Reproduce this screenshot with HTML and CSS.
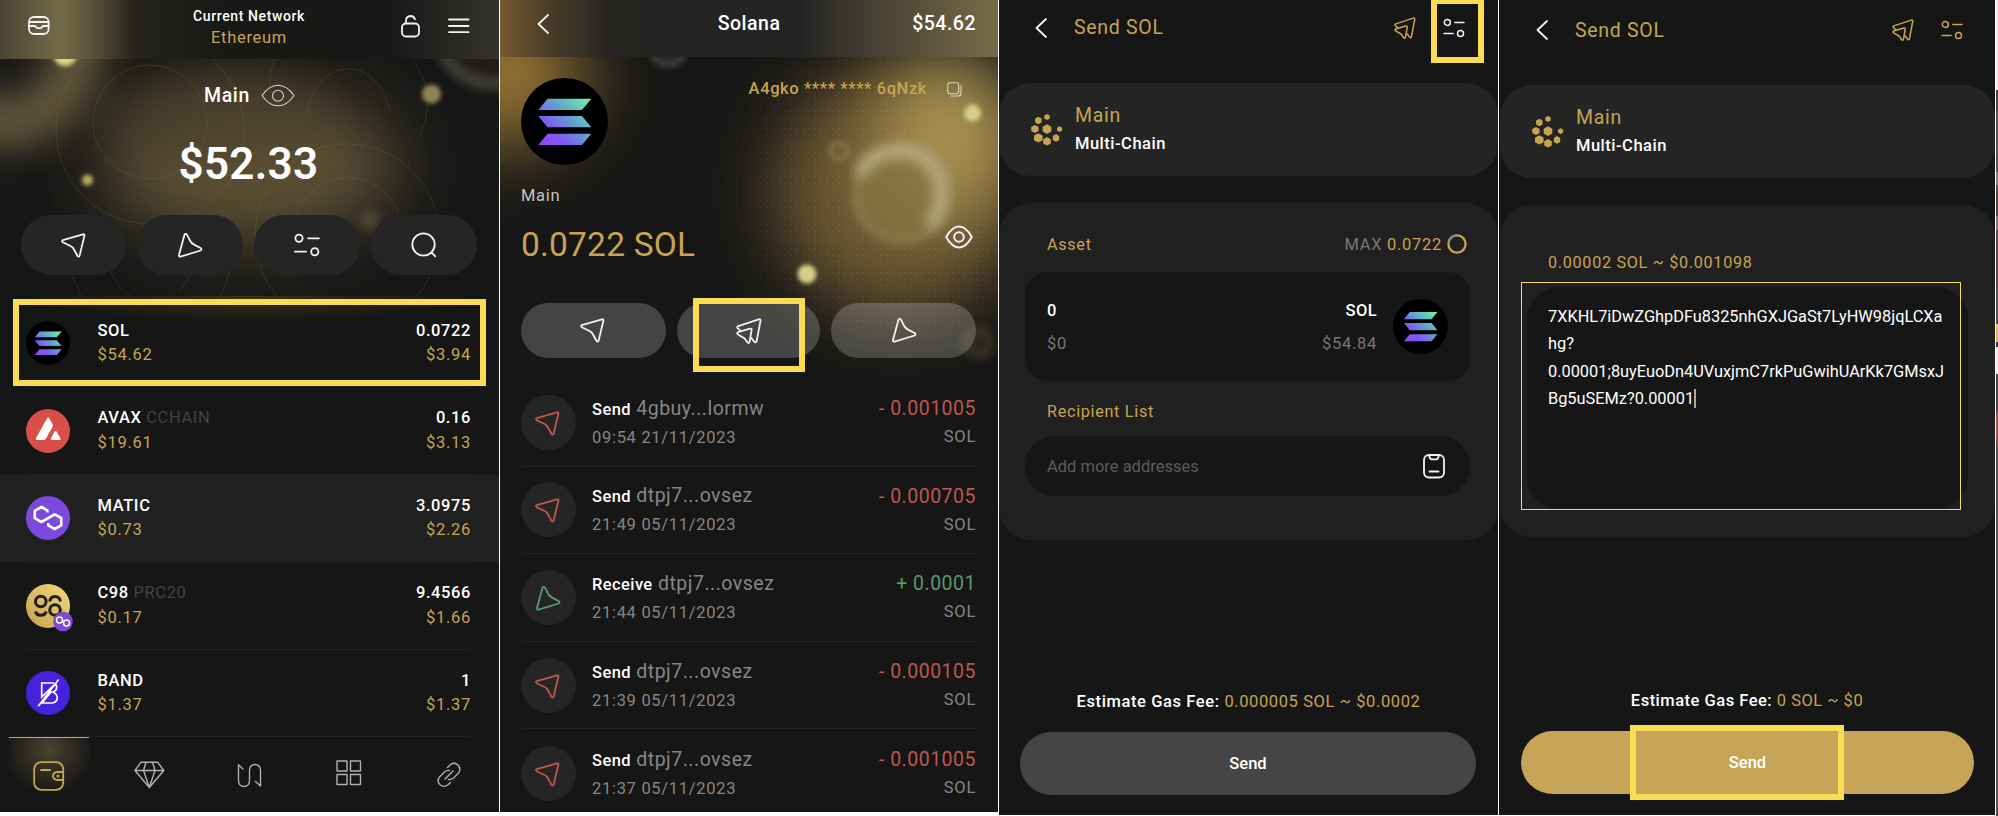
FILE: index.html
```html
<!DOCTYPE html>
<html lang="en">
<head>
<meta charset="utf-8">
<title>Wallet multi-send guide</title>
<link rel="stylesheet" href="styles.css">
</head>
<body>
<svg class="defs" width="0" height="0" aria-hidden="true">
  <defs>
    <linearGradient id="sol" gradientUnits="userSpaceOnUse" x1="20" y1="68" x2="68" y2="20">
      <stop offset="0" stop-color="#9a44fb"/><stop offset=".3" stop-color="#7d5cf0"/><stop offset=".62" stop-color="#62a8cc"/><stop offset="1" stop-color="#70f79f"/>
    </linearGradient>
    <linearGradient id="gold" x1="0" y1="1" x2="1" y2="0"><stop offset="0" stop-color="#c8a052"/><stop offset="1" stop-color="#efdb7a"/></linearGradient>
    <symbol id="i-solana" viewBox="0 0 87 87"><circle cx="43.5" cy="43.5" r="43.5" fill="#000"/><path fill="url(#sol)" d="M26.5 20.7H70.3L61 32H17.3ZM17.3 38H61L70.3 49.3H26.5ZM26.5 55.7H70.3L61 67H17.3Z"/></symbol>
    <symbol id="i-send" viewBox="0 0 25 25"><path d="M1.8 7.2 22 1.3Q23.8 1 23.4 2.8L18.6 22.6Q17.7 24.6 16.4 22.8L12.9 16.3Q12 14.4 10 13.2L1.8 9.2Q.2 8 1.8 7.2Z"/></symbol>
    <symbol id="i-receive" viewBox="0 0 25 25"><path d="M6.4 1.9Q7.5-.2 9 1.7L12 7.7Q13.3 10.1 16.5 11.9L22.6 15Q24.4 16.4 22.6 17.5L2.6 23.6Q.6 24 1 22Z"/></symbol>
    <symbol id="i-multi" viewBox="0 0 26 26"><path d="M4.5 12.6 1.8 10.4Q.4 8.9 2.2 8.1L22.7 1.3Q24.9.8 24.5 2.9L20.6 23.4Q19.7 25.3 18.3 23.7L15.5 20.2M2 14.2 14 10.7Q16 10.4 15.6 12.3L13.5 24Q12.5 26 11.3 24.3L8.7 20.4 2 16.4Q.3 15 2 14.2Z"/></symbol>
    <symbol id="i-filter" viewBox="0 0 26 24"><circle cx="5" cy="5.3" r="3.6"/><path d="M14 5.3H25M1 18.7H12"/><circle cx="20.8" cy="18.7" r="3.6"/></symbol>
    <symbol id="i-back" viewBox="0 0 12 20"><path d="M11 1 1.5 10 11 19"/></symbol>
    <symbol id="i-poly" viewBox="0 0 44 44"><path d="M21.4 16.6V14.4L15.4 11 8.8 14.8V22.2L15.4 26 28.7 18.4 35.2 22V29.4L28.7 33 22.3 29.4V27"/></symbol>
    <symbol id="i-nodes" viewBox="0 0 32 32"><path d="M16 0 18.7 1.5V4.5L16 6 13.3 4.5V1.5ZM7.3 2.8 10.5 4.6V8.4L7.3 10.2 4.1 8.4V4.6ZM4 11 7.6 13V17L4 19 .2 17V13ZM16 10.3 20.3 12.8V17.6L16 20 11.7 17.6V12.8ZM28.6 12.2 31.2 13.7V16.6L28.6 18 26 16.6V13.7ZM7.3 19.2 11.6 21.6V26.3L7.3 28.6 3 26.3V21.6ZM25 20 28.2 22V26L25 27.8 21.8 26V22ZM16 23 19.8 25.2V29.4L16 31.6 12.2 29.4V25.2Z"/></symbol>
    <filter id="b1" x="-50%" y="-50%" width="200%" height="200%"><feGaussianBlur stdDeviation="2"/></filter>
    <filter id="b4" x="-50%" y="-50%" width="200%" height="200%"><feGaussianBlur stdDeviation="4"/></filter>
    <filter id="b6" x="-50%" y="-50%" width="200%" height="200%"><feGaussianBlur stdDeviation="6"/></filter>
    <filter id="b20" x="-80%" y="-80%" width="260%" height="260%"><feGaussianBlur stdDeviation="20"/></filter>
    <filter id="b35" x="-80%" y="-80%" width="260%" height="260%"><feGaussianBlur stdDeviation="35"/></filter>
    <pattern id="dots" width="6" height="6" patternUnits="userSpaceOnUse"><circle cx="3" cy="3" r="1" fill="#c8b060" fill-opacity=".1"/></pattern>
    <radialGradient id="dotfade"><stop offset=".5" stop-color="#fff"/><stop offset="1" stop-color="#fff" stop-opacity="0"/></radialGradient>
    <mask id="dotmask"><ellipse cx="400" cy="190" rx="210" ry="190" fill="url(#dotfade)"/></mask>
  </defs>
</svg>

<main class="board">

  <section class="phone wallet">
    <svg class="art" width="499" height="299" viewBox="0 0 499 299">
      <ellipse cx="250" cy="165" rx="150" ry="78" fill="#5d5135" filter="url(#b35)"/>
      <ellipse cx="215" cy="120" rx="110" ry="45" fill="#4a3f2c" opacity=".6" filter="url(#b20)"/>
      <circle cx="2" cy="48" r="76" fill="none" stroke="#6f6440" stroke-width="44" filter="url(#b20)"/>
      <circle cx="492" cy="30" r="54" fill="#201f1d" stroke="#403c35" stroke-width="12" filter="url(#b4)"/>
      <g fill="none" stroke="#8a7b58" stroke-opacity=".2">
        <circle cx="150" cy="122" r="57"/><circle cx="150" cy="130" r="94"/><path d="M306 115A43 57 0 0 1 390 112M275 60Q268 75 270 90M412 60Q440 95 418 140"/><path d="M297 214A54 54 0 0 1 399 214"/><circle cx="347" cy="236" r="92"/><path d="M72 275 82 299M111 272Q118 288 130 296M190 275 180 292M229 272Q227 284 221 295"/>
      </g>
      <circle cx="370" cy="220" r="10" fill="#67603f" opacity=".5" filter="url(#b4)"/>
      <g filter="url(#b1)"><circle cx="65" cy="54" r="12" fill="#ddd582"/><circle cx="431.500" cy="94" r="9.500" fill="#8f8657"/><circle cx="87.500" cy="180" r="5.500" fill="#bbb062"/></g>
    </svg>
    <header class="top">
      <svg class="line i-inbox" width="22" height="20" viewBox="0 0 22 20"><rect x="1" y="1" width="19.600" height="17" rx="5"/><path d="M1 6H20.600M1 10H6.500Q7.500 10 8 11 9 12.500 11 12 13 12.500 14 11 14.500 10 15.500 10H20.600"/></svg>
      <div class="net"><span class="net-label">Current Network</span><span class="net-name">Ethereum</span></div>
      <svg class="line i-lock" width="20" height="23" viewBox="0 0 20 23"><rect x="1" y="8.500" width="17" height="13" rx="4"/><path d="M5 8V5.500Q5.300 1.200 9.500 1 13 1 14 4.200"/></svg>
      <svg class="line i-menu" width="22" height="16" viewBox="0 0 22 16"><path d="M1 1.500H20.500M1 8H20.500M1 14.200H20.500"/></svg>
    </header>
    <div class="account"><span>Main</span><svg class="line thin" width="34" height="23" viewBox="0 0 34 23"><path d="M1 11.500Q8 1.200 17 1.200T33 11.500Q26 21.800 17 21.800T1 11.500Z"/><circle cx="17" cy="11.800" r="5.500"/></svg></div>
    <div class="balance">$52.33</div>
    <div class="actions">
      <div class="pill"><svg class="line" width="25" height="25"><use href="#i-send"/></svg></div>
      <div class="pill"><svg class="line" width="25" height="25"><use href="#i-receive"/></svg></div>
      <div class="pill"><svg class="line" width="26" height="24"><use href="#i-filter"/></svg></div>
      <div class="pill"><svg class="line" width="26" height="26" viewBox="0 0 26 26"><circle cx="12.500" cy="12.500" r="11.200"/><path d="M20.500 20.500 24.300 24.300"/></svg></div>
    </div>
    <div class="tokens">
      <div class="glow"></div>
      <div class="token"><svg class="coin" width="44" height="44"><use href="#i-solana"/></svg><div class="info"><b>SOL</b><i>$54.62</i></div><div class="info end"><b>0.0722</b><i>$3.94</i></div></div>
      <div class="token"><svg class="coin" width="44" height="44" viewBox="0 0 44 44"><circle cx="22" cy="22" r="22" fill="#d84f4a"/><path fill="#fff" d="M21 9.500Q22.300 7.500 23.500 9.500L26.600 15.200Q27.200 16.500 26.500 18L20 29.500Q19 31 17.500 31H10.500Q9 30.700 10 29ZM28.500 22.500Q29.500 21.300 30.500 22.500L34.500 29.500Q35.200 31 33.800 31H25.600Q24.400 30.800 25 29.300Z"/></svg><div class="info"><b>AVAX <em>CCHAIN</em></b><i>$19.61</i></div><div class="info end"><b>0.16</b><i>$3.13</i></div></div>
      <div class="token hover"><svg class="coin" width="44" height="44" viewBox="0 0 44 44"><circle cx="22" cy="22" r="22" fill="#7b49dc"/><use class="polyline" href="#i-poly" width="44" height="44"/></svg><div class="info"><b>MATIC</b><i>$0.73</i></div><div class="info end"><b>3.0975</b><i>$2.26</i></div></div>
      <div class="token"><svg class="coin" width="48" height="44" viewBox="0 0 48 44"><circle cx="22" cy="22" r="22" fill="url(#gold)"/><g fill="none" stroke="#221f1a" stroke-width="3"><circle cx="14.800" cy="17.500" r="5.300"/><path d="M9.500 27.500Q10.500 31.300 14.800 31.300T20.200 27.500"/><circle cx="29" cy="26" r="5.300"/><path d="M23.700 17.500Q24.500 12.500 29 12.500T34.400 17.500"/></g><circle cx="37" cy="37.500" r="9.800" fill="#7b49dc"/><g fill="none" stroke="#fff" stroke-width="1.500"><circle cx="33.500" cy="36" r="3"/><circle cx="40.500" cy="39" r="3"/></g></svg><div class="info"><b>C98 <em>PRC20</em></b><i>$0.17</i></div><div class="info end"><b>9.4566</b><i>$1.66</i></div></div>
      <div class="token"><svg class="coin" width="44" height="44" viewBox="0 0 44 44"><circle cx="22" cy="22" r="22" fill="#4523de"/><path fill="none" stroke="#fff" stroke-width="1.700" d="M12.300 35.300 32.600 8.600M28 12H15.700V26L29.500 12.500Q31.500 15 30.500 18 29.500 20 27.500 21H25L16 32H26.500Q31.300 31 31.300 26.500 31 23 27 21.300"/></svg><div class="info"><b>BAND</b><i>$1.37</i></div><div class="info end"><b>1</b><i>$1.37</i></div></div>
    </div>
    <nav class="tabs">
      <div class="tab on"><svg class="line" width="32" height="30" viewBox="0 0 32 30"><rect x="1.200" y="1.200" width="29" height="27.600" rx="7"/><path d="M8 9H17M30 11H24.500Q20 11.500 20 15T24.500 19H30"/><circle cx="25" cy="15" r=".6"/></svg></div>
      <div class="tab"><svg class="line" width="31" height="28" viewBox="0 0 31 28"><path d="M7 1.200H23.500L29.800 9.500 15.300 26.500 1 9.500ZM1 9.500H29.800M12 1.200 9.500 9.500 15.300 26.500 21 9.500 18.500 1.200"/></svg></div>
      <div class="tab"><svg class="line" width="25" height="25" viewBox="0 0 25 25"><path d="M6 6 1.500 1.800V18Q2 23.500 7 23.500T12.500 18V7Q13 1.500 18 1.500T23.500 7V23L18.500 18.500"/></svg></div>
      <div class="tab up"><svg class="line" width="26" height="26" viewBox="0 0 26 26"><path d="M1 1H11V11H1ZM14.500 1H24.500V11H14.500ZM1 14.500H11V24.500H1ZM14.500 14.500H24.500V24.500H14.500Z"/></svg></div>
      <div class="tab"><svg class="line" width="26" height="26" viewBox="0 0 26 26"><path d="M11.500 5.500 14 3Q18-.5 22 3 25.500 7 22.500 11L17.500 16Q15 18 12.500 17.500M14.500 20.500 12 22.800Q8 26 4 22.800 .5 19 3.500 15L8.500 10Q11 8 13.500 8.500M9 17 17 9"/></svg></div>
    </nav>
    <div class="mark mark-sol"></div>
  </section>

  <section class="phone history">
    <svg class="art" width="498" height="380" viewBox="0 0 498 380">
      <ellipse cx="5" cy="80" rx="90" ry="75" fill="#7a622f" filter="url(#b35)"/>
      <circle cx="5" cy="68" r="38" fill="#a07938" opacity=".6" filter="url(#b20)"/>
      <ellipse cx="400" cy="190" rx="125" ry="125" fill="#6d5932" filter="url(#b35)"/>
      <ellipse cx="450" cy="135" rx="70" ry="80" fill="#b39b54" opacity=".85" filter="url(#b35)"/>
      <rect x="200" y="57" width="298" height="310" fill="url(#dots)" mask="url(#dotmask)"/>
      <circle cx="402" cy="194" r="47" fill="#86763f" stroke="#94855a" stroke-width="6" opacity=".75" filter="url(#b4)"/>
      <path d="M362 170Q374 151 402 151 432 153 441 184 443 205 433 221" fill="none" stroke="#c9bb93" stroke-width="16" stroke-linecap="round" opacity=".65" filter="url(#b6)"/>
      <circle cx="339" cy="151" r="9" fill="#7b6b40" stroke="#95855a" stroke-width="4" opacity=".5" filter="url(#b1)"/>
      <circle cx="168" cy="48" r="16" fill="#222" stroke="#373635" stroke-width="9" filter="url(#b1)"/>
      <circle cx="478" cy="343" r="13" fill="#3b301a" stroke="#5c5240" stroke-width="7" opacity=".45" filter="url(#b4)"/>
      <g filter="url(#b1)" fill="#d8cf87"><circle cx="472.500" cy="113" r="8.500"/><circle cx="307" cy="274" r="9.500"/></g>
    </svg>
    <header class="top"><svg class="line chev" width="12" height="20"><use href="#i-back"/></svg><h1>Solana</h1><span class="price">$54.62</span></header>
    <div class="hero">
      <div class="hero-row"><svg width="87" height="87"><use href="#i-solana"/></svg><div class="addr"><span>A4gko **** **** 6qNzk</span><svg class="line thin" width="15" height="15" viewBox="0 0 15 15"><rect x=".7" y=".7" width="11" height="11" rx="2.500"/><path d="M14 3.500V11Q14 14 11 14H4"/></svg></div></div>
      <p class="who">Main</p>
      <div class="amount"><span>0.0722 SOL</span><svg class="line eye" width="28" height="24" viewBox="0 0 28 24"><path d="M1.200 12Q7 1.500 14 1.500T26.800 12Q21 22.500 14 22.500T1.200 12Z"/><circle cx="14" cy="12" r="4.800"/></svg></div>
    </div>
    <div class="actions">
      <div class="pill"><svg class="line" width="25" height="25"><use href="#i-send"/></svg></div>
      <div class="pill"><svg class="line" width="26" height="26"><use href="#i-multi"/></svg></div>
      <div class="pill"><svg class="line" width="25" height="25"><use href="#i-receive"/></svg></div>
    </div>
    <div class="txs">
      <div class="tx"><div class="dir"><svg class="line" width="25" height="25"><use href="#i-send"/></svg></div><div class="what"><p><b>Send</b> <span>4gbuy...lormw</span></p><small>09:54 21/11/2023</small></div><div class="sum"><p>- 0.001005</p><small>SOL</small></div></div>
      <div class="tx"><div class="dir"><svg class="line" width="25" height="25"><use href="#i-send"/></svg></div><div class="what"><p><b>Send</b> <span>dtpj7...ovsez</span></p><small>21:49 05/11/2023</small></div><div class="sum"><p>- 0.000705</p><small>SOL</small></div></div>
      <div class="tx in"><div class="dir"><svg class="line" width="25" height="25"><use href="#i-receive"/></svg></div><div class="what"><p><b>Receive</b> <span>dtpj7...ovsez</span></p><small>21:44 05/11/2023</small></div><div class="sum"><p>+ 0.0001</p><small>SOL</small></div></div>
      <div class="tx"><div class="dir"><svg class="line" width="25" height="25"><use href="#i-send"/></svg></div><div class="what"><p><b>Send</b> <span>dtpj7...ovsez</span></p><small>21:39 05/11/2023</small></div><div class="sum"><p>- 0.000105</p><small>SOL</small></div></div>
      <div class="tx"><div class="dir"><svg class="line" width="25" height="25"><use href="#i-send"/></svg></div><div class="what"><p><b>Send</b> <span>dtpj7...ovsez</span></p><small>21:37 05/11/2023</small></div><div class="sum"><p>- 0.001005</p><small>SOL</small></div></div>
    </div>
    <div class="mark mark-multi"></div>
  </section>

  <section class="phone send">
    <header class="bar"><svg class="line chev" width="12" height="20"><use href="#i-back"/></svg><h2>Send SOL</h2><svg class="line gold" width="22" height="22"><use href="#i-multi"/></svg><svg class="line" width="22" height="20"><use href="#i-filter"/></svg></header>
    <div class="card source"><svg class="nodes" width="32" height="32"><use href="#i-nodes"/></svg><div><h3>Main</h3><p>Multi-Chain</p></div></div>
    <div class="card form">
      <div class="label"><span>Asset</span><span class="max"><em>MAX</em> 0.0722</span><svg width="20" height="20" viewBox="0 0 20 20"><circle cx="10" cy="10" r="8.600" fill="none" stroke="#c7a452" stroke-width="2.300"/><path d="M1.700 7.500A8.600 8.600 0 0 1 10 1.400" fill="none" stroke="#858585" stroke-width="2.300"/></svg></div>
      <div class="asset"><div class="col"><b>0</b><i>$0</i></div><div class="col end"><b>SOL</b><i>$54.84</i></div><svg width="55" height="55"><use href="#i-solana"/></svg></div>
      <div class="label list"><span>Recipient List</span></div>
      <div class="input"><span>Add more addresses</span><svg class="line" width="22" height="25" viewBox="0 0 22 25"><rect x="1" y="1" width="20" height="22.500" rx="5"/><path d="M6.500 1V3Q7 5.300 9 5.300H13Q15 5.300 15.500 3V1M6.500 17.500H15.500"/></svg></div>
    </div>
    <div class="fee">Estimate Gas Fee: <span>0.000005 SOL ~ $0.0002</span></div>
    <div class="submit">Send</div>
    <div class="mark mark-filter"></div>
  </section>

  <section class="phone send multi">
    <header class="bar"><svg class="line chev" width="12" height="20"><use href="#i-back"/></svg><h2>Send SOL</h2><svg class="line gold" width="22" height="22"><use href="#i-multi"/></svg><svg class="line gold" width="22" height="20"><use href="#i-filter"/></svg></header>
    <div class="card source"><svg class="nodes" width="32" height="32"><use href="#i-nodes"/></svg><div><h3>Main</h3><p>Multi-Chain</p></div></div>
    <div class="card form">
      <div class="label"><span>0.00002 SOL ~ $0.001098</span></div>
      <div class="area">7XKHL7iDwZGhpDFu8325nhGXJGaSt7LyHW98jqLCXa<br>hg?<br>0.00001;8uyEuoDn4UVuxjmC7rkPuGwihUArKk7GMsxJ<br>Bg5uSEMz?0.00001<span class="caret"></span></div>
    </div>
    <div class="fee">Estimate Gas Fee: <span>0 SOL ~ $0</span></div>
    <div class="submit">Send</div>
    <div class="mark mark-area"></div>
    <div class="mark mark-submit"></div>
  </section>

  <div class="edge"></div>
</main>
</body>
</html>
```

FILE: styles.css
```css
* { box-sizing: border-box; }
body { margin: 0; background: #fff; font-family: Roboto, sans-serif; color: #fff; font-size: 16px; letter-spacing: .7px; overflow: hidden; }
h1, h2, h3, p { margin: 0; font-weight: 400; }
b { font-weight: 480; }
i, em { font-style: normal; }
svg { display: block; flex: none; overflow: visible; }
.defs { position: absolute; }
.line { fill: none; stroke: #f2f2f2; stroke-width: 1.8; stroke-linecap: round; stroke-linejoin: round; }
.thin { stroke-width: 1.1; stroke: #d8d4c8; }
.gold { stroke: #c7a452; }

.board { display: grid; grid-template-columns: 499px 498px 499px 496px 2px; column-gap: 1px; width: 1998px; height: 816px; align-items: start; }
.phone { position: relative; height: 812px; background: #161616; overflow: hidden; display: flex; flex-direction: column; isolation: isolate; }
.art { position: absolute; left: 0; top: 0; z-index: -1; overflow: hidden; }
.mark { position: absolute; border: 6px solid #fadb54; }
.edge { height: 816px; background: linear-gradient(#f6ede8 0 90px, #4a433f 90px 110px, #5a524d 110px 172px, #8b8581 172px 185px, #544b44 185px 216px, #827a76 216px 230px, #5d4a4a 230px 285px, #58504c 285px 324px, #dcbd62 324px 342px, #3c3632 342px 347px, #f6ede8 347px 374px, #4f4846 374px 410px, #a05552 415px 435px, #564f4c 450px); }

/* wallet home */
.top { display: flex; align-items: center; flex: none; }
.wallet .top { height: 59px; padding: 0 29px 7px 28px; background: linear-gradient(90deg, #4a4533 0, #736a48 12%, #625a3f 17%, #25231c 27%, #181817 45%, #181817 78%, #35332f 100%); gap: 27px; }
.net { flex: 1; display: flex; flex-direction: column; align-items: center; padding-left: 47px; }
.net-label { font-size: 14px; font-weight: 500; line-height: 20px; margin-top: 4px; letter-spacing: .6px; }
.net-name { font-size: 16.500px; line-height: 24px; color: #c7a452; }
.account { display: flex; align-items: center; justify-content: center; gap: 11px; height: 24px; margin-top: 24px; font-size: 19.500px; font-weight: 480; }
.balance { height: 52px; line-height: 52px; margin-top: 31px; text-align: center; font-size: 44px; font-weight: 600; letter-spacing: .3px; padding-right: 2px; }
.actions { display: flex; flex: none; }
.pill { flex: 1; display: flex; align-items: center; justify-content: center; border-radius: 30px; background: #252525; }
.wallet .actions { gap: 11px; padding: 0 22px 0 20.500px; margin-top: 25px; height: 60px; }
.tokens { position: relative; padding-top: 24.500px; flex: none; }
.glow { position: absolute; left: 30px; right: 30px; top: 21px; height: 26px; background: radial-gradient(ellipse 50% 100% at 50% 0, #37310f, #16161600); }
.token { position: relative; display: grid; grid-template-columns: 71.500px 1fr auto; align-items: center; height: 87.500px; padding: 0 28px 0 26px; }
.token::after { content: ""; position: absolute; left: 26px; right: 28px; bottom: 0; height: 1px; background: #222; }
.hover { background: #202020; }
.info { display: flex; flex-direction: column; line-height: 24.500px; }
.info b { font-size: 16.500px; letter-spacing: .6px; }
.info i { font-size: 16.500px; color: #c7a452; }
.info em { color: #424242; font-weight: 400; }
.end { text-align: right; }
.polyline { fill: none; stroke: #fff; stroke-width: 2.6; stroke-linejoin: round; }
.tabs { display: flex; height: 75px; padding-left: 9px; flex: none; }
.tab { flex: none; width: 80px; height: 76px; margin-right: 20px; display: flex; align-items: center; justify-content: center; }
.tab .line { stroke: #b0b0b0; stroke-width: 1.4; }
.tab.on { border-top: 1px solid #c7a452; background: radial-gradient(circle at 50% 12px, #49442e 0, #16161600 45px); }
.tab.on .line { stroke: #c7a452; stroke-width: 1.8; }
.tab.up { padding-bottom: 4px; }
.mark-sol { left: 13px; top: 299px; width: 473px; height: 87px; }

/* token history */
.history .top { height: 57px; padding: 0 22px 10px 37px; background: linear-gradient(90deg, #765a30, #4c3e28 9%, #262522 22%, #242424 60%, #4d4636 78%, #776b49); }
.history h1 { flex: 1; text-align: center; font-size: 19.500px; font-weight: 480; padding-left: 37px; letter-spacing: .5px; }
.price { font-size: 19.500px; font-weight: 480; letter-spacing: .5px; }
.hero { padding: 21px 26px 0 21px; flex: none; }
.hero-row { display: flex; justify-content: space-between; }
.addr { display: flex; gap: 20px; color: #c7a452; font-size: 16.500px; line-height: 22px; height: 22px; align-items: center; padding-right: 10px; font-weight: 480; letter-spacing: .6px; }
.who { font-size: 16.500px; line-height: 24px; margin-top: 19px; color: #c3c3c3; }
.amount { display: flex; justify-content: space-between; height: 40px; line-height: 40px; margin-top: 17px; font-size: 33.500px; color: #c7a452; letter-spacing: .2px; }
.eye { stroke-width: 2; margin-right: -1px; }
.history .actions { gap: 11px; margin: 38px 22px 0 21px; height: 55px; }
.history .pill { background: rgba(255, 255, 255, .2); }
.history .pill:first-child { padding-right: 2px; }
.history .pill:last-child { padding-left: 2px; }
.txs { padding: 21px 22px 0 21px; flex: none; }
.tx { display: flex; align-items: center; height: 87.600px; border-bottom: 1px solid #222; }
.tx:last-child { border: 0; }
.dir { width: 55px; height: 55px; border-radius: 50%; background: #252525; display: flex; align-items: center; justify-content: center; padding-right: 3px; padding-top: 2px; }
.in .dir { padding-right: 0; }
.dir .line { stroke: #bf5650; }
.in .dir .line { stroke: #5c9870; }
.what { flex: 1; padding-left: 16px; color: #868686; }
.what, .sum { padding-top: 2px; }
.what p, .sum p { font-size: 19.500px; line-height: 28px; letter-spacing: .5px; }
.what b { color: #fff; font-size: 16.500px; letter-spacing: .4px; }
.what small, .sum small { display: block; font-size: 16.500px; line-height: 28px; color: #868686; }
.sum { text-align: right; color: #bf5650; }
.in .sum p { color: #5c9870; }
.mark-multi { left: 193px; top: 298px; width: 112px; height: 74px; }

/* send screens */
.send { height: 815px; }
.bar { display: flex; align-items: center; height: 83px; flex: none; padding: 0 33px 28px 36px; }
.bar h2 { flex: 1; padding-left: 27px; font-size: 19.500px; color: #c7a452; font-weight: 420; }
.bar .gold + .line { margin-left: 27px; }
.card { border-radius: 32px; background: #242424; flex: none; }
.source { height: 93px; padding: 0 33px; display: flex; align-items: center; gap: 11px; }
.source h3 { font-size: 19.500px; line-height: 28px; color: #c7a452; }
.source p { font-size: 16.500px; line-height: 28px; font-weight: 480; letter-spacing: .5px; }
.nodes { fill: #c7a452; margin-left: -1px; margin-right: 1px; }
.form { margin-top: 27px; height: 337px; background: #202020; padding: 30px 28px 0 26px; }
.label { display: flex; align-items: center; height: 22px; padding: 0 3px 0 22px; color: #c7a452; font-size: 16.200px; }
.label span:first-child { flex: 1; }
.max { margin-right: 5px; font-size: 16.500px; }
.max em { color: #777; }
.asset { display: flex; align-items: center; height: 109px; margin-top: 17px; padding: 0 22px 0 22px; border-radius: 22px; background: #161616; }
.col { display: flex; flex-direction: column; line-height: 33px; flex: 1; }
.col b { letter-spacing: .4px; font-size: 16.500px; }
.col i { color: #777; font-size: 16.500px; }
.asset svg { margin-left: 16px; }
.list { margin-top: 19px; }
.input { display: flex; align-items: center; justify-content: space-between; height: 60px; margin-top: 14px; padding: 0 25px 0 22px; border-radius: 30px; background: #161616; color: #5c5c5c; font-size: 16.500px; letter-spacing: 0; }
.fee { margin-top: 150px; height: 24px; line-height: 24px; text-align: center; font-weight: 480; font-size: 16.500px; letter-spacing: .6px; }
.fee span { color: #c7a452; font-weight: 400; }
.submit { height: 63px; line-height: 63px; margin: 18px 22px 0 21px; border-radius: 32px; background: #454545; text-align: center; font-weight: 480; letter-spacing: 0; font-size: 16.500px; flex: none; }
.mark-filter { left: 432px; top: -2px; width: 53px; height: 65px; }

.multi .bar { height: 85px; padding: 0 32px 25px 37px; }
.multi .source { padding-left: 33px; margin-left: 1px; }
.multi .form { margin-left: 1px; height: 332px; padding: 46px 27px 0 27px; }
.multi .label { height: 22px; padding-left: 21px; }
.area { height: 222px; margin-top: 14px; padding: 16px 0 0 21px; border-radius: 32px; background: #161616; font-size: 16.350px; line-height: 27.300px; letter-spacing: 0; white-space: nowrap; }
.caret { display: inline-block; width: 2px; height: 19px; background: #aaa; vertical-align: -4px; }
.multi .fee { margin-top: 152px; letter-spacing: .5px; }
.multi .submit { background: #c6a559; margin: 18px 21px 0 22px; }
.mark-area { left: 22px; top: 282px; width: 440px; height: 228px; border-width: 1px; }
.mark-submit { left: 131px; top: 725px; width: 214px; height: 75px; }
```
